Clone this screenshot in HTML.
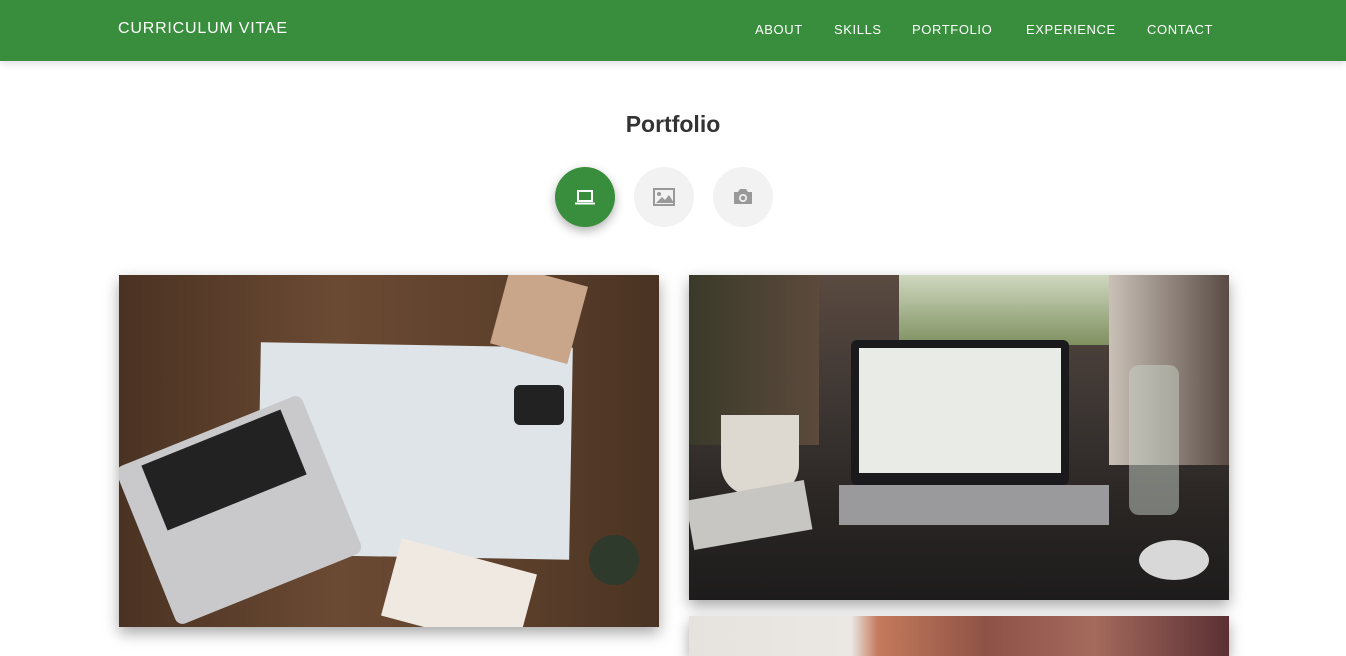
<!DOCTYPE html>
<html><head><meta charset="utf-8"><style>
body{margin:0;width:1346px;height:641px;overflow:hidden;background:#fff;font-family:"Liberation Sans",sans-serif;position:relative}
.nav{position:absolute;left:0;top:0;width:1346px;height:61px;background:#388e3c;box-shadow:0 2px 8px rgba(0,0,0,.15)}
.brand{position:absolute;left:118px;top:20px;color:#fff;font-size:16px;letter-spacing:.8px}
.links{position:absolute;top:22px;color:#fff;font-size:13px;letter-spacing:.6px}
.links span{position:absolute;white-space:nowrap}
h2{position:absolute;left:0;width:1346px;top:111px;margin:0;text-align:center;font-size:23px;font-weight:bold;color:#333}
.c{position:absolute;top:167px;width:60px;height:60px;border-radius:50%;background:#f2f2f2}
.c svg{position:absolute;left:18px;top:18px}
.img{position:absolute;box-shadow:0 6px 14px rgba(0,0,0,.35);overflow:hidden}
</style></head><body>
<div class="nav"><div class="brand">CURRICULUM VITAE</div>
<div class="links"><span style="left:755px">ABOUT</span><span style="left:834px">SKILLS</span><span style="left:912px">PORTFOLIO</span><span style="left:1026px">EXPERIENCE</span><span style="left:1147px">CONTACT</span></div></div>
<h2>Portfolio</h2>
<div class="c" style="left:555px;background:#388e3c;box-shadow:0 4px 10px rgba(0,0,0,.3)"><svg width="24" height="24" viewBox="0 0 24 24"><rect x="5" y="6" width="14" height="10" fill="none" stroke="#fff" stroke-width="2"/><rect x="2" y="17.5" width="20" height="2" fill="#fff"/></svg></div>
<div class="c" style="left:634px"><svg width="24" height="24" viewBox="0 0 24 24"><rect x="2" y="4" width="20" height="16" fill="none" stroke="#999" stroke-width="2"/><circle cx="7" cy="9" r="2" fill="#999"/><path d="M4 18l6-6 3 3 4-5 5 8z" fill="#999"/></svg></div>
<div class="c" style="left:713px"><svg width="24" height="24" viewBox="0 0 24 24"><path d="M3 7h4l2-3h6l2 3h4v12H3z" fill="#999"/><circle cx="12" cy="13" r="4" fill="#f2f2f2"/><circle cx="12" cy="13" r="2.3" fill="#999"/></svg></div>

<div class="img" style="left:119px;top:275px;width:540px;height:352px;background:linear-gradient(90deg,#4a3222,#6b4a33 40%,#5e412c 70%,#4a3323)">
<div style="position:absolute;left:140px;top:70px;width:312px;height:212px;background:#dfe4e8;transform:rotate(1deg)"></div>
<div style="position:absolute;left:20px;top:150px;width:200px;height:170px;background:#c9c9cc;transform:rotate(-22deg);border-radius:8px"></div>
<div style="position:absolute;left:30px;top:160px;width:150px;height:70px;background:#222;transform:rotate(-22deg)"></div>
<div style="position:absolute;left:380px;top:0;width:80px;height:80px;background:#c9a58a;transform:rotate(15deg)"></div>
<div style="position:absolute;left:395px;top:110px;width:50px;height:40px;background:#222;border-radius:6px"></div>
<div style="position:absolute;left:470px;top:260px;width:50px;height:50px;background:#2d3a2c;border-radius:50%"></div>
<div style="position:absolute;left:270px;top:280px;width:140px;height:80px;background:#efe9e2;transform:rotate(15deg)"></div>
</div>

<div class="img" style="left:689px;top:275px;width:540px;height:325px;background:linear-gradient(180deg,#5a4a40 0%,#3d3633 40%,#2a2624 70%,#1d1c1c)">
<div style="position:absolute;left:210px;top:0;width:220px;height:70px;background:linear-gradient(180deg,#cfd8c0,#7f9060)"></div>
<div style="position:absolute;left:420px;top:0;width:120px;height:190px;background:linear-gradient(90deg,#c9c0b8,#5a4c44)"></div>
<div style="position:absolute;left:0;top:0;width:130px;height:170px;background:linear-gradient(90deg,#3a3a2a,#5c4a3c)"></div>
<div style="position:absolute;left:162px;top:65px;width:218px;height:145px;background:#1a1a1c;border-radius:6px"></div>
<div style="position:absolute;left:170px;top:73px;width:202px;height:125px;background:#e8ebe6"></div>
<div style="position:absolute;left:150px;top:210px;width:270px;height:40px;background:#9a9a9c"></div>
<div style="position:absolute;left:32px;top:140px;width:78px;height:80px;background:#ddd8d0;border-radius:0 0 30px 30px"></div>
<div style="position:absolute;left:0;top:215px;width:120px;height:50px;background:#c8c6c2;transform:rotate(-10deg)"></div>
<div style="position:absolute;left:440px;top:90px;width:50px;height:150px;background:rgba(200,210,200,.5);border-radius:10px"></div>
<div style="position:absolute;left:450px;top:265px;width:70px;height:40px;background:#d8d8d8;border-radius:50%"></div>
</div>

<div class="img" style="left:689px;top:616px;width:540px;height:40px;background:linear-gradient(90deg,#e6e3df 0%,#ebe7e3 30%,#c47a5c 35%,#8e5246 55%,#a46a5c 75%,#5a3034 100%)"></div>
</body></html>
